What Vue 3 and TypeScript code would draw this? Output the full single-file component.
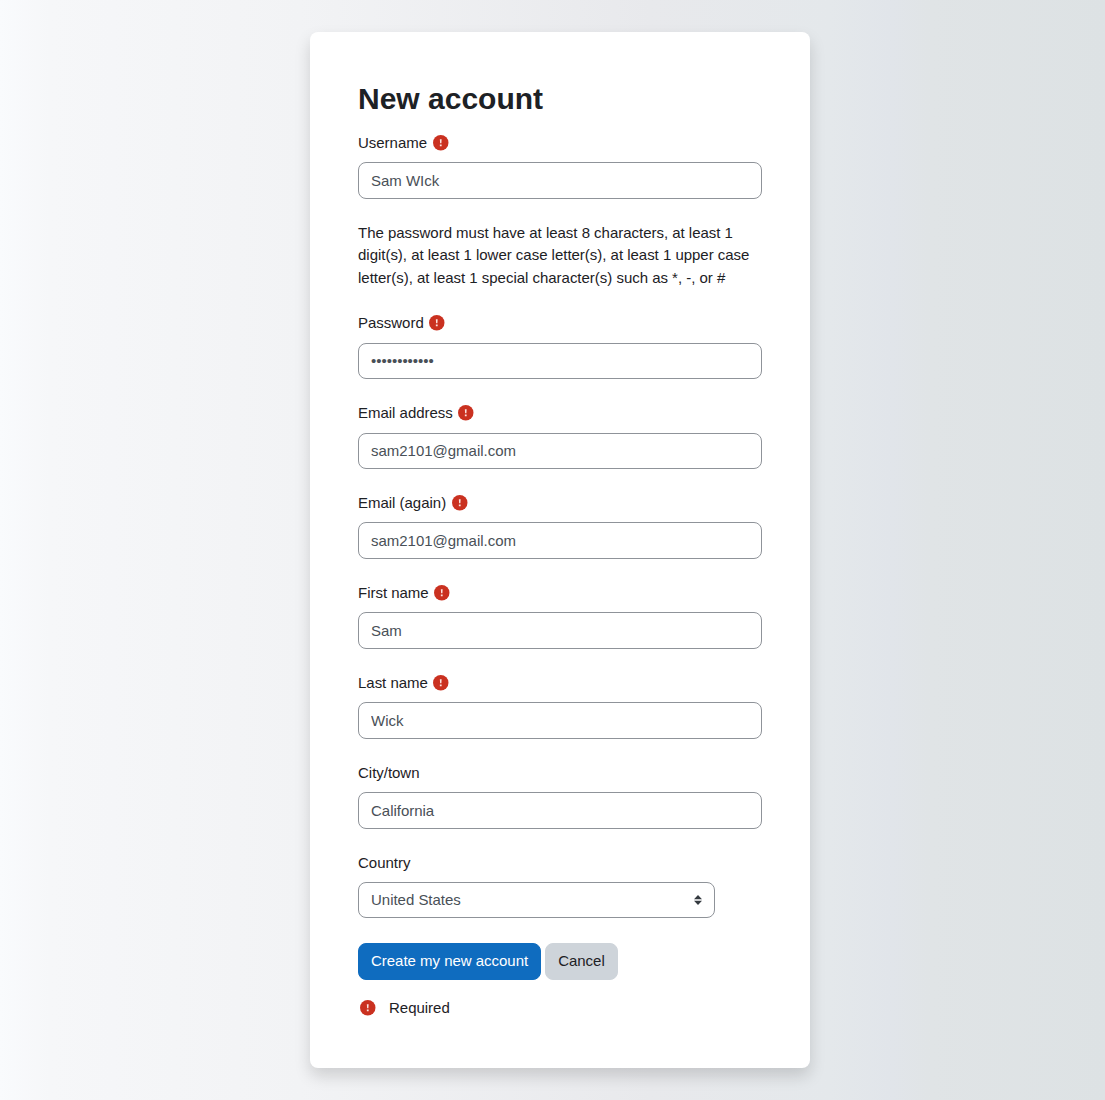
<script setup lang="ts">
import { ref, defineComponent, h } from 'vue'

interface Field {
  id: string
  label: string
  type: string
  value: string
  required: boolean
}

const RequiredIcon = defineComponent({
  setup: () => () =>
    h('svg', { viewBox: '0 0 31 31', width: 15.5, height: 15.5, overflow: 'visible', role: 'img', 'aria-label': 'Required' }, [
      h('circle', { cx: 15.5, cy: 15.5, r: 15.5, fill: '#ca3120' }),
      h('path', {
        fill: '#fbe3df',
        d: 'M13.700 8.500h3.600l-.5 8.200h-2.600zM13.700 19h3.600v3.300h-3.600z',
      }),
    ]),
})

const account = ref<Field[]>([
  { id: 'username', label: 'Username', type: 'text', value: 'Sam WIck', required: true },
])

const details = ref<Field[]>([
  { id: 'password', label: 'Password', type: 'password', value: 'Abcdef-12345', required: true },
  { id: 'email', label: 'Email address', type: 'text', value: 'sam2101@gmail.com', required: true },
  { id: 'email2', label: 'Email (again)', type: 'text', value: 'sam2101@gmail.com', required: true },
  { id: 'firstname', label: 'First name', type: 'text', value: 'Sam', required: true },
  { id: 'lastname', label: 'Last name', type: 'text', value: 'Wick', required: true },
  { id: 'city', label: 'City/town', type: 'text', value: 'California', required: false },
])

const country = ref('US')
</script>

<template>
  <div class="page">
    <main class="card">
      <h1>New account</h1>
      <form @submit.prevent>
        <div v-for="field in account" :key="field.id" class="group first">
          <label :for="field.id">{{ field.label }}<RequiredIcon v-if="field.required" class="icon" /></label>
          <input :id="field.id" v-model="field.value" :type="field.type" class="control" />
        </div>
        <p class="policy">
          The password must have at least 8 characters, at least 1 digit(s), at least 1 lower case letter(s),
          at least 1 upper case letter(s), at least 1 special character(s) such as *, -, or #
        </p>
        <div v-for="field in details" :key="field.id" class="group">
          <label :for="field.id">{{ field.label }}<RequiredIcon v-if="field.required" class="icon" /></label>
          <input :id="field.id" v-model="field.value" :type="field.type" class="control" />
        </div>
        <div class="group country">
          <label for="country">Country</label>
          <div class="select-wrap">
            <select id="country" v-model="country" class="control">
              <option value="US">United States</option>
            </select>
            <svg class="arrows" viewBox="0 0 8 10" width="8" height="10" aria-hidden="true">
              <path fill="#343a40" d="M4 0L0 4.200h8zM4 10L0 5.800h8z" />
            </svg>
          </div>
        </div>
        <div class="actions">
          <button type="submit" class="btn primary">Create my new account</button>
          <button type="button" class="btn secondary">Cancel</button>
        </div>
        <div class="legend"><RequiredIcon /><span>Required</span></div>
      </form>
    </main>
  </div>
</template>

<style>
body {
  margin: 0;
}
</style>

<style scoped>
.page {
  box-sizing: border-box;
  min-height: 1100px;
  padding: 32px 0 32px 310px;
  background: linear-gradient(to right, #f9fbfd 0, #f6f7f9 50px, #f2f3f5 300px, #e8e9ec 650px, #e4e8eb 830px, #e1e5ea 890px, #e0e4e6 930px, #dde2e4 1105px);
  font-family: "Liberation Sans", Arial, sans-serif;
  font-size: 15px;
  line-height: 22.5px;
  letter-spacing: -0.02px;
  color: #1d2125;
}
.card {
  box-sizing: border-box;
  width: 500px;
  height: 1036px;
  padding: 48px;
  background: #fff;
  border-radius: 8px;
  box-shadow: 0 8px 16px rgba(0, 0, 0, 0.15);
}
h1 {
  margin: 0;
  padding: 1px 0 14.75px;
  font-size: 30px;
  line-height: 36px;
  font-weight: 700;
  letter-spacing: 0;
}
.group {
  height: 89.93px;
}
.first {
  height: 90px;
}
label {
  display: flex;
  align-items: center;
  height: 22.5px;
  margin-bottom: 8px;
}
.icon {
  margin-left: 5.5px;
  margin-bottom: 1.5px;
}
.control {
  display: block;
  box-sizing: border-box;
  width: 100%;
  height: 36.5px;
  margin: 0;
  padding: 6px 12px;
  border: 1px solid #8f9399;
  border-radius: 8px;
  outline: none;
  background: #fff;
  color: #495057;
  font: inherit;
  letter-spacing: inherit;
  appearance: none;
}
.policy {
  margin: 0 0 22.87px;
}
.select-wrap {
  position: relative;
  width: 357px;
}
.select-wrap .control {
  height: 36px;
}
.arrows {
  position: absolute;
  right: 13px;
  top: 13px;
  pointer-events: none;
}
.country {
  height: 91.55px;
}
.actions {
  display: flex;
  gap: 4px;
}
.btn {
  height: 36.5px;
  margin: 0;
  padding: 6px 12px;
  border: 1px solid transparent;
  border-radius: 8px;
  font: inherit;
  letter-spacing: inherit;
}
.primary {
  background: #0f6cbf;
  border-color: #0f6cbf;
  color: #fff;
}
.secondary {
  background: #ced4da;
  border-color: #ced4da;
  color: #1d2125;
}
.legend {
  display: flex;
  align-items: center;
  gap: 13.5px;
  margin-top: 17px;
  padding-left: 2px;
}
</style>
